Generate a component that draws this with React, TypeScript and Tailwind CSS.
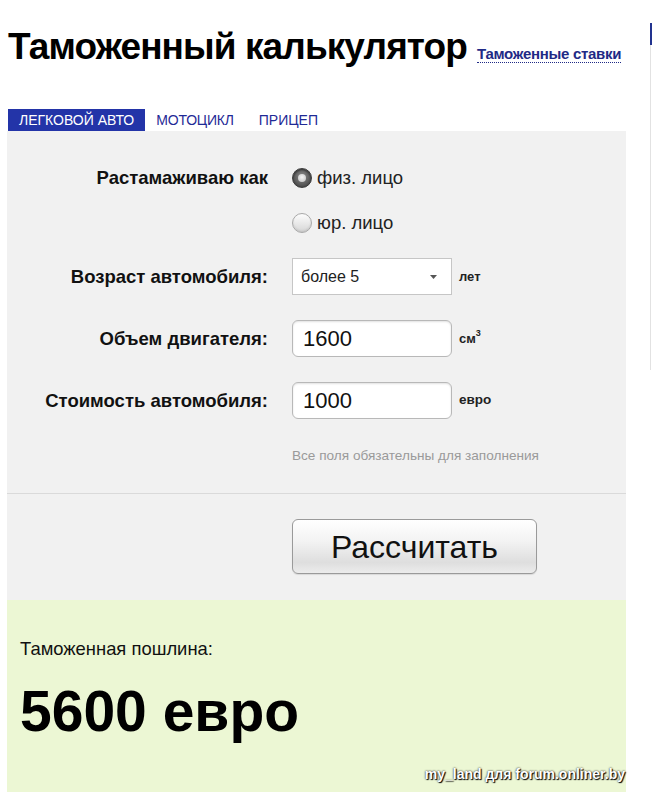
import React from "react";

function Radio({ checked }: { checked: boolean }) {
  if (checked) {
    return (
      <div className="w-[20px] h-[20px] rounded-full bg-[radial-gradient(circle_at_50%_40%,#8a8a8a,#3a3a3a)] border border-[#3a3a3a] flex items-center justify-center shadow-[inset_0_1px_2px_rgba(0,0,0,0.5)]">
        <div className="w-[8px] h-[8px] rounded-full bg-[radial-gradient(circle_at_50%_40%,#f4f4f4,#bdbdbd)]" />
      </div>
    );
  }
  return (
    <div className="w-[20px] h-[20px] rounded-full border border-[#a9a9a9] bg-[linear-gradient(#fdfdfd,#d6d6d6)] shadow-[inset_0_-1px_2px_rgba(0,0,0,0.1)]" />
  );
}

function Label({ children }: { children: React.ReactNode }) {
  return (
    <div className="w-[261px] text-right text-[18.5px] font-bold text-[#111] leading-[24px] whitespace-nowrap">
      {children}
    </div>
  );
}

export default function App() {
  return (
    <div className="w-[652px] h-[800px] bg-white flex font-['Liberation_Sans',Arial,sans-serif] text-[#111] overflow-hidden">
      <div className="w-[626px] shrink-0 pl-[7px] flex flex-col">
        <div className="mt-[25px] flex items-baseline pl-[1px] whitespace-nowrap">
          <h1 className="text-[37px] font-bold leading-[44px] text-black tracking-[-0.9px]">
            Таможенный калькулятор
          </h1>
          <a className="ml-[10px] text-[15px] font-bold text-[#1f2a86] border-b border-dotted border-[#1f2a86] leading-[17px] tracking-[-0.3px]">
            Таможенные ставки
          </a>
        </div>

        <div className="mt-[40px] flex ml-[1px] text-[14px] leading-[22px] whitespace-nowrap">
          <div className="px-[11px] bg-[#2334a8] text-white">ЛЕГКОВОЙ АВТО</div>
          <div className="pl-[11px] pr-3 text-[#1f2a96] tracking-[-0.2px]">МОТОЦИКЛ</div>
          <div className="px-3 ml-[1px] text-[#1f2a96]">ПРИЦЕП</div>
        </div>

        <div className="w-[619px] bg-[#f1f1f1] flex flex-col">
          <div className="mt-[35px] h-[24px] flex items-center">
            <Label>Растамаживаю как</Label>
            <div className="ml-[24px] flex items-center gap-[5px]">
              <Radio checked />
              <span className="text-[18.5px] text-[#222]">физ. лицо</span>
            </div>
          </div>
          <div className="mt-[21px] h-[24px] flex items-center">
            <div className="w-[261px]" />
            <div className="ml-[24px] flex items-center gap-[5px]">
              <Radio checked={false} />
              <span className="text-[18.5px] text-[#222]">юр. лицо</span>
            </div>
          </div>

          <div className="mt-[23px] h-[37px] flex items-center">
            <Label>Возраст автомобиля:</Label>
            <div className="ml-[24px] w-[160px] h-[37px] bg-white border border-[#c6c6c6] flex items-center pl-[8px] pr-[14px] justify-between">
              <span className="text-[16px] text-[#222]">более 5</span>
              <svg width="7" height="4" viewBox="0 0 7 4">
                <path d="M0 0 L7 0 L3.5 4 Z" fill="#555" />
              </svg>
            </div>
            <span className="ml-[7px] text-[13px] font-bold text-[#222]">лет</span>
          </div>

          <div className="mt-[25px] h-[37px] flex items-center">
            <Label>Объем двигателя:</Label>
            <div className="ml-[24px] w-[160px] h-[37px] bg-white border border-[#b8b8b8] rounded-[6px] shadow-[inset_0_1px_2px_rgba(0,0,0,0.12)] flex items-center pl-[10px]">
              <span className="text-[22px] text-[#111]">1600</span>
            </div>
            <span className="ml-[7px] text-[13px] font-bold text-[#222] flex items-start leading-[14px]">
              см<span className="text-[9px] leading-[9px] -mt-[3px]">3</span>
            </span>
          </div>

          <div className="mt-[25px] h-[37px] flex items-center">
            <Label>Стоимость автомобиля:</Label>
            <div className="ml-[24px] w-[160px] h-[37px] bg-white border border-[#b8b8b8] rounded-[6px] shadow-[inset_0_1px_2px_rgba(0,0,0,0.12)] flex items-center pl-[10px]">
              <span className="text-[22px] text-[#111]">1000</span>
            </div>
            <span className="ml-[7px] text-[13.5px] font-bold text-[#222]">евро</span>
          </div>

          <div className="mt-[29px] pl-[285px] text-[13.6px] leading-[16px] text-[#9a9a9a] whitespace-nowrap">
            Все поля обязательны для заполнения
          </div>

          <div className="mt-[29px] h-px bg-[#dadada]" />

          <div className="mt-[25px] mb-[26px] pl-[285px]">
            <div className="w-[245px] h-[55px] rounded-[6px] border border-[#9a9a9a] bg-[linear-gradient(#ffffff,#f3f3f3_40%,#dedede_80%,#ececec)] flex items-center justify-center shadow-[0_1px_1px_rgba(0,0,0,0.1)]">
              <span className="text-[32px] leading-[36px] text-[#111]">Рассчитать</span>
            </div>
          </div>
        </div>

        <div className="relative w-[619px] h-[192px] bg-[#ecf7d4] pl-[13px] flex flex-col">
          <div className="mt-[38px] text-[18.4px] leading-[22px] text-[#111] whitespace-nowrap">Таможенная пошлина:</div>
          <div className="mt-[19px] text-[57px] font-bold leading-[64px] text-black whitespace-nowrap">5600 евро</div>
          <div className="absolute right-[1px] bottom-[7px] text-[14px] font-bold text-white whitespace-nowrap [text-shadow:0_0_2px_#000,1px_1px_1px_#000]">
            my_land для forum.onliner.by
          </div>
        </div>
      </div>

      <div className="ml-[24px] pt-[23px] flex flex-col shrink-0">
        <div className="w-[2px] h-[22px] bg-[#22338f]" />
        <div className="w-px h-[325px] bg-[#e2e2e2]" />
      </div>
    </div>
  );
}
